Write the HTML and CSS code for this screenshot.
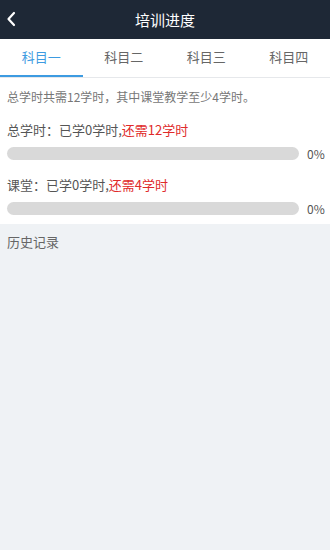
FILE: index.html
```html
<!DOCTYPE html>
<html lang="zh-CN">
<head>
<meta charset="utf-8">
<title>培训进度</title>
<link rel="stylesheet" href="styles.css">
</head>
<body>
<div class="app">
  <header class="topbar">
    <span class="back">
      <svg width="10" height="16" viewBox="0 0 10 16"><path d="M8 2 L2.5 8 L8 14" fill="none" stroke="#fff" stroke-width="2.2" stroke-linecap="round" stroke-linejoin="round"/></svg>
    </span>
    <h1 class="title">培训进度</h1>
  </header>
  <nav class="tabs">
    <div class="tab active">科目一</div>
    <div class="tab">科目二</div>
    <div class="tab">科目三</div>
    <div class="tab">科目四</div>
  </nav>
  <section class="progress">
    <p class="intro">总学时共需12学时，其中课堂教学至少4学时。</p>
    <p class="label label-first">总学时：已学0学时,<span class="need">还需12学时</span></p>
    <div class="row">
      <div class="bar"><div class="fill" style="width:0%"></div></div>
      <span class="pct">0%</span>
    </div>
    <p class="label">课堂：已学0学时,<span class="need">还需4学时</span></p>
    <div class="row">
      <div class="bar"><div class="fill" style="width:0%"></div></div>
      <span class="pct">0%</span>
    </div>
  </section>
  <section class="history">
    <div class="history-title">历史记录</div>
  </section>
</div>
</body>
</html>
```

FILE: styles.css
```css
* { box-sizing: border-box; }
html, body { margin: 0; padding: 0; height: 100%; }
body {
  font-family: "Noto Sans CJK SC", "Noto Sans", Roboto, sans-serif;
  background: #eff2f5;
}
.app { display: flex; flex-direction: column; min-height: 100%; }
.topbar {
  height: 39px;
  background: #1e2836;
  display: flex;
  align-items: center;
  justify-content: center;
  position: relative;
}
.back {
  position: absolute;
  left: 6px;
  top: 11px;
  width: 12px;
  height: 16px;
  display: flex;
}
.title {
  margin: 0;
  color: #fff;
  font-size: 15px;
  font-weight: normal;
  line-height: 39px;
}
.tabs {
  display: flex;
  background: #fff;
  height: 39px;
  border-bottom: 1px solid #e6e8eb;
}
.tab {
  flex: 1;
  text-align: center;
  font-size: 13px;
  color: #666;
  line-height: 36px;
  border-bottom: 2px solid transparent;
}
.tab.active {
  color: #3d9be1;
  border-bottom-color: #3d9be1;
}
.progress {
  background: #fff;
  padding: 9px 0 9px 7px;
}
.intro {
  margin: 0;
  font-size: 12px;
  line-height: 20px;
  color: #777;
}
.label {
  margin: 15px 0 0;
  font-size: 13px;
  line-height: 20px;
  color: #555;
}
.label-first { margin-top: 13px; }
.need { color: #e02a2a; }
.row {
  display: flex;
  align-items: center;
  margin-top: 7px;
}
.bar {
  flex: 1;
  height: 13px;
  border-radius: 7px;
  background: #d9d9d9;
  overflow: hidden;
}
.fill { height: 100%; background: #3d9be1; }
.pct {
  width: 31px;
  padding-left: 8px;
  font-size: 12px;
  color: #555;
  line-height: 13px;
}
.history {
  flex: 1;
  background: #eff2f5;
  padding: 8px 7px;
}
.history-title {
  font-size: 13px;
  line-height: 20px;
  color: #666;
}
```
